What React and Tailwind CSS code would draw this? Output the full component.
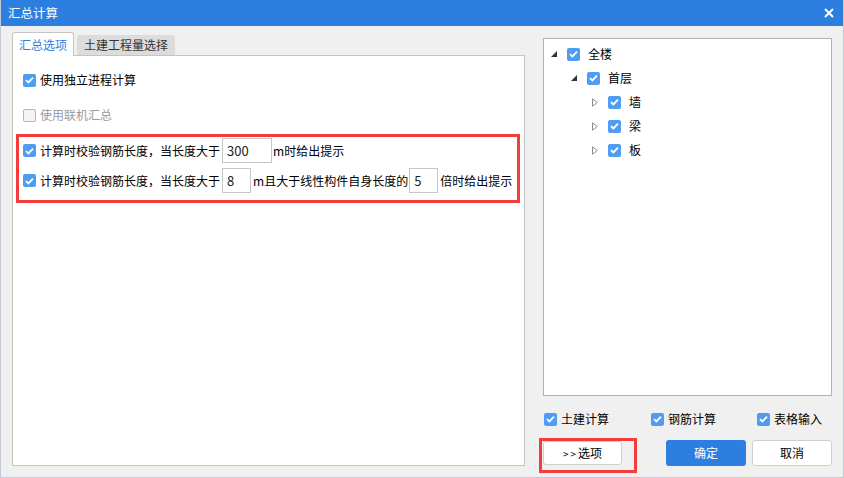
import React from 'react';

const font = { fontFamily: '"Noto Sans CJK SC", "Noto Sans", sans-serif' };

function Check({ checked = true, disabled = false }) {
  if (disabled) {
    return <span className="block w-[13px] h-[13px] shrink-0 rounded-[2px] border border-[#b5b5b5] bg-[#f4f4f4]" />;
  }
  return (
    <span className="w-[13px] h-[13px] shrink-0 rounded-[2px] bg-[#4e9df3] flex items-center justify-center">
      {checked && (
        <svg width="9" height="8" viewBox="0 0 9 8">
          <path d="M1 4.2 L3.4 6.4 L8 1.6" fill="none" stroke="#fff" strokeWidth="1.8" />
        </svg>
      )}
    </span>
  );
}

function NumInput({ value, w }) {
  return (
    <span className={`block ${w} h-[25px] shrink-0 border border-[#c6c6c6] bg-white text-[13px] leading-[23px] pl-[4px] text-[#222]`}>
      {value}
    </span>
  );
}

function Expanded() {
  return (
    <svg width="6" height="6" viewBox="0 0 6 6" className="shrink-0">
      <path d="M6 0 L6 6 L0 6 Z" fill="#333" />
    </svg>
  );
}

function Collapsed() {
  return (
    <svg width="6" height="9" viewBox="0 0 6 9" className="shrink-0">
      <path d="M0.5 0.8 L5.3 4.5 L0.5 8.2 Z" fill="none" stroke="#8a8a8a" strokeWidth="1" />
    </svg>
  );
}

function TreeRow({ indent, expanded, label }) {
  return (
    <div className="h-[24px] flex items-center" style={{ paddingLeft: indent }}>
      <span className="w-[9px] flex justify-start">{expanded ? <Expanded /> : <Collapsed />}</span>
      <span className="ml-[7px]"><Check /></span>
      <span className="ml-[8px] text-[12px] text-black">{label}</span>
    </div>
  );
}

export default function App() {
  return (
    <div className="w-[844px] h-[478px] bg-[#f0f0f0] flex flex-col border-x border-b border-[#c3cad5] overflow-hidden" style={font}>
      {/* title bar */}
      <div className="h-[26px] bg-[#2c7fdf] flex items-center justify-between pl-[7px] pr-[9px] shrink-0">
        <span className="text-white text-[12.5px]">汇总计算</span>
        <svg width="10" height="10" viewBox="0 0 10 10">
          <path d="M1 1 L9 9 M9 1 L1 9" stroke="#fff" strokeWidth="2" />
        </svg>
      </div>

      <div className="flex-1 flex pl-[11px] pr-[11px]">
        {/* left side */}
        <div className="w-[513px] shrink-0 flex flex-col pt-[6px] pb-[11px]">
          <div className="h-[23px] flex items-end gap-[3px] text-[12px]">
            <div className="h-[24px] -mb-px relative z-10 bg-white border border-b-0 border-[#c4c4c4] rounded-t-[3px] px-[6px] flex items-center text-[#2c7fdf]">
              汇总选项
            </div>
            <div className="h-[20px] bg-[#dcdcdc] rounded-t-[3px] px-[7px] flex items-center text-[#333]">
              土建工程量选择
            </div>
          </div>
          <div className="flex-1 bg-white border border-[#c4c4c4] flex flex-col text-[12px] text-black">
            <div className="h-[16px] mt-[16px] pl-[10px] flex items-center gap-[4px]">
              <Check />
              <span>使用独立进程计算</span>
            </div>
            <div className="h-[16px] mt-[19px] pl-[10px] flex items-center gap-[4px] text-[#9a9a9a]">
              <Check disabled />
              <span>使用联机汇总</span>
            </div>
            <div className="mt-[11px] ml-[3px] mr-[4px] border-[3px] border-[#f23d3d] pt-[1px] pb-[7px] pl-[4px] flex flex-col gap-[5px] whitespace-nowrap">
              <div className="h-[25px] flex items-center">
                <Check />
                <span className="ml-[4px]">计算时校验钢筋长度，当长度大于</span>
                <span className="ml-[2px]"><NumInput value="300" w="w-[50px]" /></span>
                <span className="ml-[1px]">m时给出提示</span>
              </div>
              <div className="h-[25px] flex items-center">
                <Check />
                <span className="ml-[4px]">计算时校验钢筋长度，当长度大于</span>
                <span className="ml-[2px] shrink-0"><NumInput value="8" w="w-[29px]" /></span>
                <span className="ml-[2px]">m且大于线性构件自身长度的</span>
                <span className="ml-[1px] shrink-0"><NumInput value="5" w="w-[29px]" /></span>
                <span className="ml-[2px]">倍时给出提示</span>
              </div>
            </div>
          </div>
        </div>

        {/* right side */}
        <div className="ml-[18px] w-[289px] shrink-0 flex flex-col pt-[12px] text-[12px] text-black">
          <div className="h-[358px] bg-white border border-[#b2b2b2] pt-[3px] pl-[7px]">
            <TreeRow indent={0} expanded label="全楼" />
            <TreeRow indent={20} expanded label="首层" />
            <TreeRow indent={41} label="墙" />
            <TreeRow indent={41} label="梁" />
            <TreeRow indent={41} label="板" />
          </div>
          <div className="h-[16px] mt-[15px] pl-[1px] flex items-center">
            <div className="w-[107px] flex items-center gap-[4px]"><Check /><span>土建计算</span></div>
            <div className="w-[106px] flex items-center gap-[4px]"><Check /><span>钢筋计算</span></div>
            <div className="flex items-center gap-[4px]"><Check /><span>表格输入</span></div>
          </div>
          <div className="mt-[13px] flex items-start">
            <div className="relative mt-[1px]">
              <button className="w-[79px] h-[24px] bg-white border border-[#d0d0d0] rounded-[3px] text-[12px] text-black flex items-center justify-center">
                <span className="text-[10px] tracking-[2px]">&gt;&gt;</span>选项
              </button>
              <div className="absolute left-[-4px] top-[-3px] w-[98px] h-[35px] border-[3px] border-[#f23d3d]" />
            </div>
            <button className="ml-[44px] w-[80px] h-[26px] bg-[#2c7fdf] rounded-[3px] text-white text-[12px]">确定</button>
            <button className="ml-[6px] w-[80px] h-[26px] bg-white border border-[#cfcfcf] rounded-[3px] text-black text-[12px]">取消</button>
          </div>
        </div>
      </div>
    </div>
  );
}
